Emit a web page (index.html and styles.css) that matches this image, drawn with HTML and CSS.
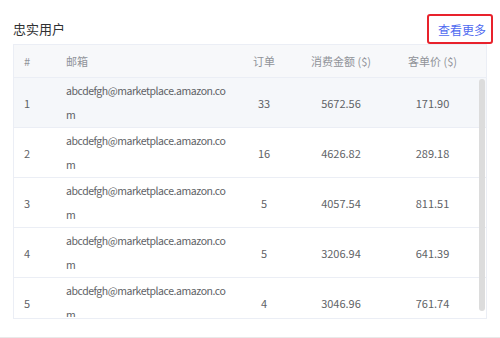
FILE: index.html
```html
<!DOCTYPE html>
<html lang="zh-CN">
<head>
    <meta charset="UTF-8">
    <title>忠实用户</title>
    <link rel="stylesheet" href="styles.css">
</head>
<body>
    <div class="panel">
        <div class="panel-head">
            <div class="panel-title">忠实用户</div>
            <a class="more-link" href="#">查看更多</a>
        </div>

        <div class="table">
            <div class="row head">
                <div class="cell">#</div>
                <div class="cell">邮箱</div>
                <div class="cell center">订单</div>
                <div class="cell center">消费金额 ($)</div>
                <div class="cell center">客单价 ($)</div>
            </div>

            <div class="tbody">
                <div class="row hover">
                    <div class="cell">1</div>
                    <div class="cell email">abcdefgh@marketplace.amazon.com</div>
                    <div class="cell center">33</div>
                    <div class="cell center">5672.56</div>
                    <div class="cell center">171.90</div>
                </div>
                <div class="row">
                    <div class="cell">2</div>
                    <div class="cell email">abcdefgh@marketplace.amazon.com</div>
                    <div class="cell center">16</div>
                    <div class="cell center">4626.82</div>
                    <div class="cell center">289.18</div>
                </div>
                <div class="row">
                    <div class="cell">3</div>
                    <div class="cell email">abcdefgh@marketplace.amazon.com</div>
                    <div class="cell center">5</div>
                    <div class="cell center">4057.54</div>
                    <div class="cell center">811.51</div>
                </div>
                <div class="row">
                    <div class="cell">4</div>
                    <div class="cell email">abcdefgh@marketplace.amazon.com</div>
                    <div class="cell center">5</div>
                    <div class="cell center">3206.94</div>
                    <div class="cell center">641.39</div>
                </div>
                <div class="row">
                    <div class="cell">5</div>
                    <div class="cell email">abcdefgh@marketplace.amazon.com</div>
                    <div class="cell center">4</div>
                    <div class="cell center">3046.96</div>
                    <div class="cell center">761.74</div>
                </div>
            </div>

            <!-- scroll thumb drawn over the body -->
            <div class="scroll-thumb"></div>
        </div>
    </div>
</body>
</html>
```

FILE: styles.css
```css
body {
    margin: 0;
    background: #fff;
    font-family: "Noto Sans CJK SC", "Noto Sans", sans-serif;
    color: #606266;
}
.panel {
    padding: 14px 13px 18px;
    border-bottom: 1px solid #e9e9e9;
}
.panel-head {
    display: flex;
    justify-content: space-between;
    align-items: center;
    height: 30px;
}
.panel-title {
    font-size: 13px;
    color: #303133;
    margin-top: -2px;
}
.more-link {
    display: flex;
    align-items: center;
    height: 26px;
    padding: 0 5px 0 9px;
    margin-right: -6px;
    border: 2px solid #e8222c;
    border-radius: 3px;
    font-size: 12px;
    color: #4f6af0;
    text-decoration: none;
}
.table {
    position: relative;
    width: 472px;
    height: 273px;
    border: 1px solid #ebeef5;
    overflow: hidden;
}
.row {
    display: grid;
    grid-template-columns: 42px 175px 66px 88px 95px 6px;
    height: 50px;
    border-bottom: 1px solid #ebeef5;
    box-sizing: border-box;
    font-size: 11px;
}
.row.head {
    height: 33px;
    background: #f7f8fa;
    color: #909399;
}
.row.hover {
    background: #f5f7fa;
}
.cell {
    display: flex;
    align-items: center;
    padding-left: 10px;
    line-height: 24px;
}
.cell.center {
    justify-content: center;
    padding-left: 0;
}
.cell.email {
    padding-right: 5px;
    font-size: 10.5px;
    letter-spacing: -0.45px;
    word-break: break-all;
}
.tbody {
    height: 239px;
    overflow: hidden;
}
.scroll-thumb {
    position: absolute;
    right: 1px;
    top: 34px;
    width: 6px;
    height: 232px;
    border-radius: 3px;
    background: #dcdcdc;
}
```
